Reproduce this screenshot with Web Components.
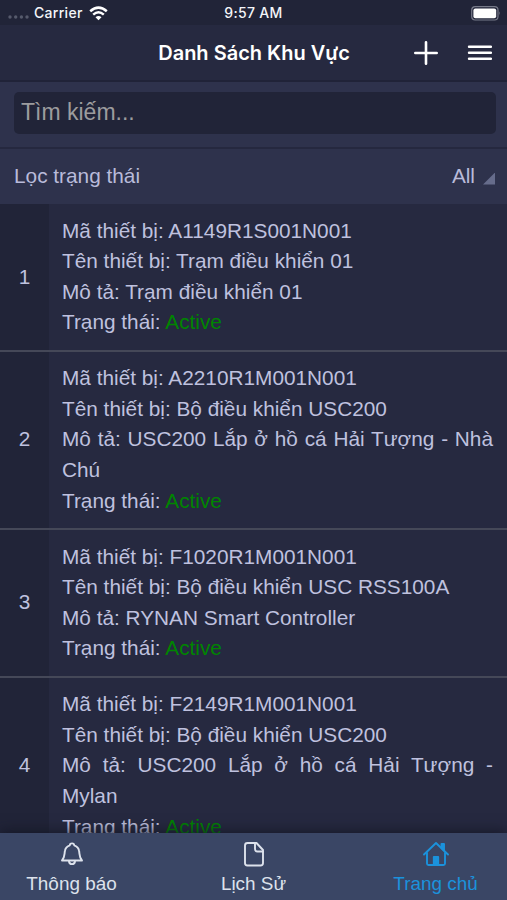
<!DOCTYPE html>
<html lang="vi">
<head>
<meta charset="utf-8">
<meta name="viewport" content="width=device-width, initial-scale=1">
<title>Danh Sách Khu Vực</title>
<style>
  body {
    margin: 0;
    background: #262940;
    font-family: "Liberation Sans", Arial, sans-serif;
  }
</style>
</head>
<body>
<area-app>
  <status-bar slot="top" carrier="Carrier" time="9:57 AM"></status-bar>
  <nav-header slot="top">Danh Sách Khu Vực</nav-header>
  <search-box slot="top" placeholder="Tìm kiếm..."></search-box>
  <status-filter slot="top" value="All">Lọc trạng thái</status-filter>

  <device-row index="1" code="A1149R1S001N001" name="Trạm điều khiển 01" note="Trạm điều khiển 01" status="Active"></device-row>
  <device-row index="2" code="A2210R1M001N001" name="Bộ điều khiển USC200" note="USC200 Lắp ở hồ cá Hải Tượng - Nhà Chú" status="Active"></device-row>
  <device-row index="3" code="F1020R1M001N001" name="Bộ điều khiển USC RSS100A" note="RYNAN Smart Controller" status="Active"></device-row>
  <device-row index="4" code="F2149R1M001N001" name="Bộ điều khiển USC200" note="USC200 Lắp ở hồ cá Hải Tượng - Mylan" status="Active"></device-row>

  <tab-item slot="tabs" icon="bell">Thông báo</tab-item>
  <tab-item slot="tabs" icon="file">Lịch Sử</tab-item>
  <tab-item slot="tabs" icon="home" active>Trang chủ</tab-item>
</area-app>

<script>
// Clone the markup into an open shadow root
function attach(el, html) {
  const template = document.createElement('template')
  template.innerHTML = html
  const root = el.attachShadow({ mode: 'open' })
  root.appendChild(template.content.cloneNode(true))
  return root
}

class AreaApp extends HTMLElement {
  constructor() {
    super();
    attach(this, `
<style>
  :host {
    display: flex;
    flex-direction: column;
    height: 900px;
    overflow: hidden;
    background: #262940;
  }
  .list {
    flex: 1;
    min-height: 0;
    overflow: hidden;
  }
  .tabs {
    display: grid;
    grid-template-columns: 143px 1fr 143px;
    flex: none;
    height: 67px;
    background: #3a4665;
    box-shadow: 0 -2px 12px rgba(18, 20, 34, .75);
    z-index: 1;
  }
</style>
<slot name="top"></slot>
<div class="list"><slot></slot></div>
<div class="tabs"><slot name="tabs"></slot></div>
`)
  }
}

class StatusBar extends HTMLElement {
  constructor() {
    super();
    this._root = attach(this, `
<style>
  :host {
    display: grid;
    grid-template-columns: 1fr auto 1fr;
    align-items: center;
    flex: none;
    box-sizing: border-box;
    height: 25px;
    padding: 1px 6px 0 8px;
    background: #212438;
    color: #f4f5f9;
    font: 500 14px/24px Inter, sans-serif;
    letter-spacing: .3px;
  }
  .left { display: flex; align-items: center; }
  .dots { margin: 7px 5px 0 0; }
  .wifi { margin-left: 6px; }
  .time { margin-right: 2px; }
  .battery { justify-self: end; }
  svg { display: block; }
</style>
<div class="left">
  <svg class="dots" width="21" height="4" viewBox="0 0 21 4" fill="#565a6c">
    <circle cx="2" cy="2" r="1.7"/><circle cx="7.7" cy="2" r="1.7"/><circle cx="13.4" cy="2" r="1.7"/><circle cx="19" cy="2" r="1.7"/>
  </svg>
  <span class="carrier"></span>
  <svg class="wifi" width="19" height="15" viewBox="0 0 19 15" fill="none" stroke="#fff" stroke-width="2.5">
    <path d="M1.2 5.3Q9.5 -2 17.8 5.3"/>
    <path d="M4.2 8.6Q9.5 4 14.8 8.6"/>
    <path d="M6.5 11.2Q9.5 8.6 12.5 11.2L9.5 14.3Z" fill="#fff" stroke="none"/>
  </svg>
</div>
<span class="time"></span>
<svg class="battery" width="30" height="15" viewBox="0 0 30 15">
  <rect x=".7" y=".7" width="26.3" height="13.3" rx="3.5" fill="none" stroke="#777a89" stroke-width="1.2"/>
  <rect x="2.4" y="2.5" width="22.8" height="9.8" rx="2" fill="#fff"/>
  <path d="M28.2 5.2Q29.8 7.3 28.2 9.5Z" fill="#777a89"/>
</svg>
`)
  }

  connectedCallback() {
    this._root.querySelector('.carrier').textContent = this.getAttribute('carrier')
    this._root.querySelector('.time').textContent = this.getAttribute('time')
  }
}

class NavHeader extends HTMLElement {
  constructor() {
    super();
    attach(this, `
<style>
  :host {
    display: grid;
    grid-template-columns: 1fr auto 1fr;
    align-items: center;
    flex: none;
    box-sizing: border-box;
    height: 57px;
    padding: 0 14px;
    background: #262940;
    border-bottom: 2px solid #202338;
    color: #fff;
    font: 600 20px/54px Inter, sans-serif;
  }
  .title { grid-column: 2; margin-left: 1px; }
  .actions {
    display: flex;
    align-items: center;
    justify-content: flex-end;
    gap: 29px;
    margin-right: 1px;
  }
  svg { display: block; }
</style>
<span class="title"><slot></slot></span>
<div class="actions">
  <svg width="24" height="24" viewBox="0 0 24 24" stroke="#fff" stroke-width="2.6" stroke-linecap="round"><path d="M12 1.3V22.7M1.3 12H22.7"/></svg>
  <svg width="25" height="18" viewBox="0 0 25 18" stroke="#fff" stroke-width="2.4" stroke-linecap="round"><path d="M2 2.800H24M2 8.800H24M2 14.800H24"/></svg>
</div>
`)
  }
}

class SearchBox extends HTMLElement {
  constructor() {
    super();
    this._root = attach(this, `
<style>
  :host {
    display: block;
    flex: none;
    padding: 10px 11px 13px 14px;
    background: #2e324c;
    border-bottom: 2px solid #25283f;
  }
  input {
    display: block;
    box-sizing: border-box;
    width: 100%;
    height: 42px;
    padding: 0 7px 1px;
    border: 0;
    border-radius: 5px;
    outline: 0;
    background: #212438;
    color: #c5c7e0;
    font: 23px "Liberation Sans", Arial, sans-serif;
  }
  input::placeholder { color: #9c9c9e; opacity: 1; }
</style>
<input type="text">
`)
  }

  connectedCallback() {
    this._root.querySelector('input').placeholder = this.getAttribute('placeholder')
  }
}

class StatusFilter extends HTMLElement {
  constructor() {
    super();
    this._root = attach(this, `
<style>
  :host {
    display: flex;
    justify-content: space-between;
    align-items: center;
    flex: none;
    box-sizing: border-box;
    height: 55px;
    padding: 0 12px 2px 14px;
    background: #2e324c;
    color: #b9bbda;
    font-size: 20.8px;
  }
  .select { display: flex; align-items: flex-end; gap: 8px; }
  .arrow {
    width: 12px;
    height: 12px;
    margin-bottom: 3px;
    background: #666c8b;
    clip-path: polygon(100% 0, 100% 100%, 0 100%);
  }
</style>
<slot></slot>
<div class="select"><span class="value"></span><i class="arrow"></i></div>
`)
  }

  connectedCallback() {
    this._root.querySelector('.value').textContent = this.getAttribute('value')
  }
}

class DeviceRow extends HTMLElement {
  constructor() {
    super();
    this._root = attach(this, `
<style>
  :host {
    display: grid;
    grid-template-columns: 49px 1fr;
    border-bottom: 2px solid #454858;
    color: #bfc1df;
    font-size: 20.8px;
    line-height: 30.6px;
  }
  .index {
    display: flex;
    align-items: center;
    justify-content: center;
    background: #212438;
  }
  .info { padding: 11.6px 14px 11.7px 13px; }
  .info div { text-align: justify; }
  .status span { color: #008500; }
</style>
<div class="index"></div>
<div class="info">
  <div class="code"></div>
  <div class="name"></div>
  <div class="note"></div>
  <div class="status">Trạng thái: <span></span></div>
</div>
`)
  }

  connectedCallback() {
    this._set('.index', this.getAttribute('index'))
    this._set('.code', 'Mã thiết bị: ' + this.getAttribute('code'))
    this._set('.name', 'Tên thiết bị: ' + this.getAttribute('name'))
    this._set('.note', 'Mô tả: ' + this.getAttribute('note'))
    this._set('.status span', this.getAttribute('status'))
  }

  _set(selector, value) {
    this._root.querySelector(selector).textContent = value
  }
}

const icons = {
  bell: `<path d="M3 20.5C6 17.5 5.2 14 6 10.5C6.6 7.5 8.5 6 10.8 5.3C10.8 2.7 15.2 2.7 15.2 5.3C17.5 6 19.4 7.5 20 10.5C20.8 14 20 17.5 23 20.5Z"/><path d="M10 21.5C10.5 25 15.5 25 16 21.5"/>`,
  file: `<path d="M15.5 3H6.5Q4 3 4 5.5V23Q4 25.5 6.5 25.5H19.5Q22 25.5 22 23V10Z"/><path d="M14 3V9Q14 11.500 16.500 11.500H22"/>`,
  home: `<path d="M1 14.5L13 3L25 14.5"/><path d="M4 13V23.5Q4 25 5.5 25H20.5Q22 25 22 23.5V13"/><path d="M18.500 7V4H21V10.500L18.500 8Z" fill="currentColor"/><path d="M10.8 25V17H15.2V25Z" fill="currentColor"/>`
}

class TabItem extends HTMLElement {
  constructor() {
    super();
    this._root = attach(this, `
<style>
  :host {
    display: flex;
    flex-direction: column;
    align-items: center;
    padding-top: 7px;
    color: #dde2ec;
    font-size: 18.9px;
    line-height: 25px;
  }
  :host([active]) { color: #1b92dc; }
  svg {
    display: block;
    width: 26px;
    height: 28px;
    margin-bottom: 3px;
    fill: none;
    stroke: currentColor;
    stroke-width: 1.900;
    stroke-linejoin: round;
    stroke-linecap: round;
  }
</style>
<svg viewBox="0 0 26 28"></svg>
<span><slot></slot></span>
`)
  }

  connectedCallback() {
    this._root.querySelector('svg').innerHTML = icons[this.getAttribute('icon')]
  }
}

// Define the custom elements
customElements.define('area-app', AreaApp);
customElements.define('status-bar', StatusBar);
customElements.define('nav-header', NavHeader);
customElements.define('search-box', SearchBox);
customElements.define('status-filter', StatusFilter);
customElements.define('device-row', DeviceRow);
customElements.define('tab-item', TabItem);
</script>
</body>
</html>
